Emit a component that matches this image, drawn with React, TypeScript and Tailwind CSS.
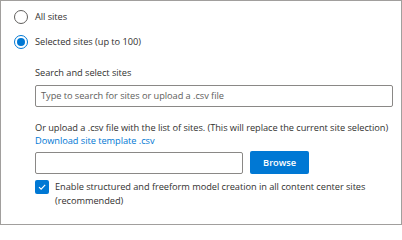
import React from "react";

const Radio = ({ checked, label }: { checked?: boolean; label: string }) => {
  return (
    <div className="flex items-center h-[25px] gap-x-[7px]">
      <span
        className={
          checked
            ? "w-[14px] h-[14px] rounded-full border border-[#0078d4] flex justify-center items-center"
            : "w-[14px] h-[14px] rounded-full border border-[#605e5c]"
        }
      >
        {checked && <span className="w-[8px] h-[8px] rounded-full bg-[#0078d4]" />}
      </span>
      <span className="leading-[14px]">{label}</span>
    </div>
  );
};

const App = () => {
  return (
    <div className="w-[402px] h-[225px] bg-white border border-[#a19f9d] pt-[3px] pl-[13px] text-[9.25px] tracking-[-0.05px] text-[#323130] font-['Open_Sans',sans-serif]">
      <Radio label="All sites" />
      <Radio checked label="Selected sites (up to 100)" />

      <div className="pl-[21px] w-[380px] flex flex-col">
        <p className="mt-[12px] leading-[14px]">Search and select sites</p>
        <div className="mt-[5px] w-[358px] h-[22px] border border-[#8a8886] rounded-[2px] flex items-center px-[5px]">
          <span className="text-[#605e5c] leading-[14px]">
            Type to search for sites or upload a .csv file
          </span>
        </div>

        <p className="mt-[14px] leading-[13px] whitespace-nowrap">
          Or upload a .csv file with the list of sites. (This will replace the current site selection)
        </p>
        <a className="leading-[13px] text-[#0078d4] w-fit">Download site template .csv</a>

        <div className="mt-[4px] flex items-end gap-x-[7px]">
          <div className="w-[208px] h-[22px] border border-[#8a8886] rounded-[2px]" />
          <button
            type="button"
            className="w-[59px] h-[23px] bg-[#0078d4] text-white font-semibold rounded-[2px] flex justify-center items-center"
          >
            Browse
          </button>
        </div>

        <div className="mt-[6px] flex items-start gap-x-[6px]">
          <span className="w-[14px] h-[14px] shrink-0 bg-[#0078d4] rounded-[2px] flex justify-center items-center">
            <svg width="10" height="10" viewBox="0 0 10 10" fill="none">
              <path d="M2 5.2 L4.1 7.2 L8.2 2.8" stroke="white" strokeWidth="1.1" />
            </svg>
          </span>
          <p className="w-[338px] leading-[14px]">
            Enable structured and freeform model creation in all content center sites (recommended)
          </p>
        </div>
      </div>
    </div>
  );
};

export default App;
